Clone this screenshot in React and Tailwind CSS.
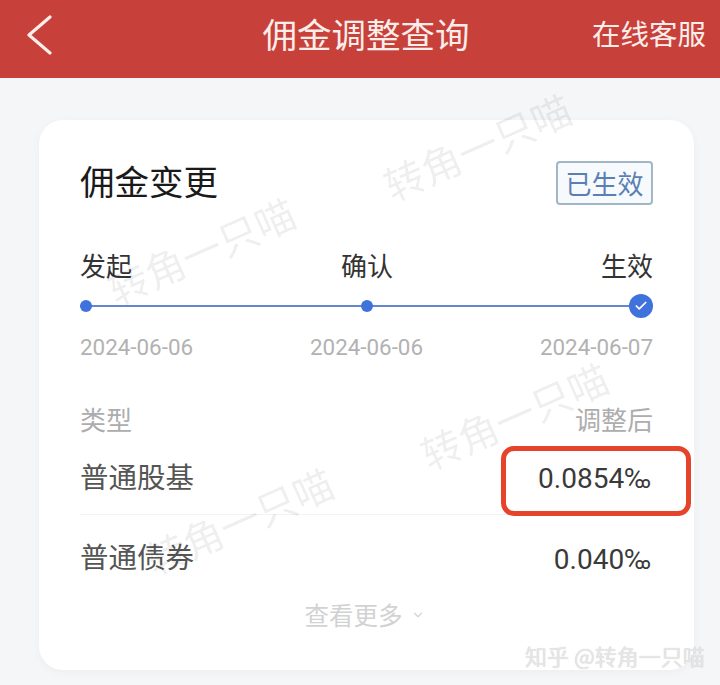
import { ChevronDown, Check } from 'lucide-react'

function Watermark({ className }) {
  return (
    <div className={`absolute text-[40px] leading-none whitespace-nowrap text-black/[0.08] -rotate-[24deg] pointer-events-none ${className}`}>
      转角一只喵
    </div>
  )
}

export default function App() {
  return (
    <div className="w-[720px] h-[685px] overflow-hidden relative bg-[#f5f6f8] font-['Noto_Sans_CJK_SC','Noto_Sans',sans-serif]">
      {/* Header */}
      <header className="h-[78px] bg-[#c8403a] grid grid-cols-[1fr_auto_1fr] items-center pl-[26px] pr-[14px] text-[#fbeeea]">
        <svg width="26" height="40" viewBox="0 0 26 40" fill="none" className="-mt-[9px]">
          <path d="M24 2 L3 20 L24 38" stroke="currentColor" strokeWidth="3.2" strokeLinecap="round" strokeLinejoin="round" />
        </svg>
        <h1 className="text-[34.5px] leading-none -mt-[12px] whitespace-nowrap font-normal">佣金调整查询</h1>
        <div className="text-[28.5px] leading-none text-right -mt-[11px] whitespace-nowrap">在线客服</div>
      </header>

      {/* Card */}
      <main className="relative ml-[39px] mt-[42px] w-[655px] h-[550px] bg-white rounded-[24px] shadow-[0_2px_10px_rgba(0,0,0,0.04)] pl-[41px] pr-[41px] pt-[41px]">
        <div className="flex items-center justify-between h-[44px]">
          <div className="text-[34.5px] leading-none -mt-[6px] text-[#1a1a1a]">佣金变更</div>
          <div className="w-[97px] h-[44px] flex items-center justify-center rounded-[4px] border-2 border-[#a3b6c6] bg-[#f6fafd] text-[26px] leading-none text-[#5b7fb5]">
            已生效
          </div>
        </div>

        {/* Progress */}
        <div className="mt-[42px] flex justify-between text-[26px] leading-[36px] text-[#333]">
          <span>发起</span>
          <span className="pl-[1px]">确认</span>
          <span>生效</span>
        </div>
        <div className="relative mt-[11px] h-[24px] flex items-center justify-between">
          <div className="absolute left-0 right-0 top-[11px] h-[2px] bg-[#6586d2]" />
          <div className="relative w-[24px] flex">
            <div className="size-[12px] rounded-full bg-[#3f72dc]" />
          </div>
          <div className="relative size-[12px] rounded-full bg-[#3f72dc]" />
          <div className="relative size-[24px] rounded-full bg-[#3f72dc] flex items-center justify-center">
            <Check size={14} strokeWidth={3} className="text-white" />
          </div>
        </div>
        <div className="mt-[17px] flex justify-between font-['Roboto',sans-serif] text-[22.4px] leading-[24px] text-[#b2b2b2]">
          <span>2024-06-06</span>
          <span>2024-06-06</span>
          <span>2024-06-07</span>
        </div>

        {/* Table */}
        <div className="mt-[42px] flex justify-between text-[26px] leading-[36px] text-[#adadad]">
          <span>类型</span>
          <span>调整后</span>
        </div>
        <div className="mt-[22px] flex items-center justify-between h-[36px] pb-[2px] text-[#555]">
          <span className="text-[28.5px] leading-none">普通股基</span>
          <span className="font-['Roboto',sans-serif] text-[28px] leading-none mt-[6px] mr-[2px] text-[#3a3a3a]">0.0854‰</span>
        </div>
        <div className="mt-[19px] h-px bg-[#f3f3f3]" />
        <div className="mt-[23px] flex items-center justify-between h-[36px] text-[#555]">
          <span className="text-[28.5px] leading-none">普通债券</span>
          <span className="font-['Roboto',sans-serif] text-[28px] leading-none mt-[8px] mr-[2px] text-[#3a3a3a]">0.040‰</span>
        </div>
        <div className="mt-[23px] flex items-center justify-center gap-[8px] pr-[4px] text-[24.5px] leading-[36px] text-[#d2d2d2]">
          <span>查看更多</span>
          <ChevronDown size={14} strokeWidth={2} />
        </div>

        {/* Red highlight */}
        <div className="absolute left-[462px] top-[326px] w-[190px] h-[70px] rounded-[13px] border-[5px] border-[#e5432a]" />

        <Watermark className="left-[338px] top-[6px]" />
        <Watermark className="left-[62px] top-[110px]" />
        <Watermark className="left-[375px] top-[275px]" />
        <Watermark className="left-[100px] top-[380px]" />
      </main>

      {/* Zhihu mark */}
      <div className="absolute left-[525px] top-[640px] text-[22px] leading-[30px] whitespace-nowrap text-[#e6e6e6] [text-shadow:0_0_1px_rgba(0,0,0,0.2)]">
        知乎 @转角一只喵
      </div>
    </div>
  )
}
